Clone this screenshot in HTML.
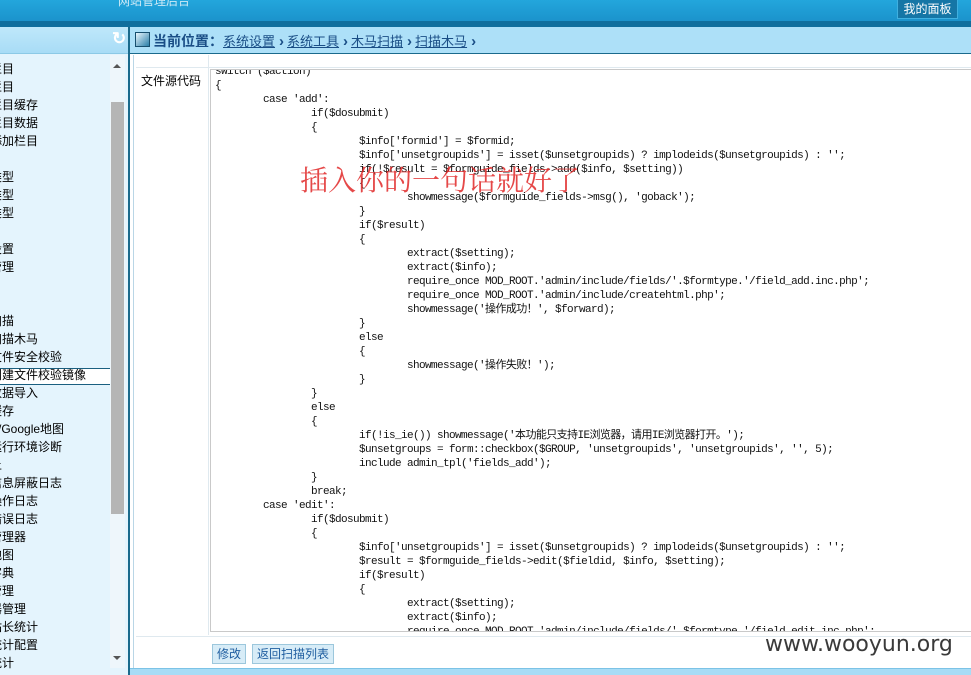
<!DOCTYPE html>
<html><head><meta charset="utf-8"><style>
*{margin:0;padding:0;box-sizing:border-box}
body{width:971px;height:675px;overflow:hidden;position:relative;background:#fff;font-family:"Liberation Sans","Noto Sans CJK SC",sans-serif;font-size:12px;color:#000}
.a{position:absolute}
#hdr{left:0;top:0;width:971px;height:21px;background:linear-gradient(#23a6dc,#1b93cc)}
#strip{left:0;top:21px;width:971px;height:6px;background:#0f6e9d}
#btn{left:897px;top:0;width:61px;height:19px;background:#1576a6;border:1px solid #3fb0e0;border-top:none;color:#fff;font-size:12px;text-align:center;line-height:18px}
#side{left:0;top:27px;width:128px;height:648px;background:#e4f4fd}
#sidehd{left:0;top:27px;width:128px;height:27px;background:linear-gradient(#bfe8fb,#a8dcf6);border-bottom:1px solid #8cc9e6}
#sb{left:110px;top:55px;width:15px;height:613px;background:#eef6fb}
#thumb{left:111px;top:102px;width:13px;height:412px;background:#b5b5b5}
#sideline{left:128px;top:27px;width:2px;height:648px;background:#1a6a8c}
.it{position:absolute;left:-10px;font-size:12px;line-height:18px;white-space:nowrap}
#sel{left:0;top:368px;width:110px;height:17px;background:#fff;border-top:1px solid #1a5f80;border-bottom:1px solid #1a5f80}
#crumb{left:130px;top:27px;width:841px;height:27px;background:#ade0f8;border-bottom:1px solid #1a6a8c}
#main{left:133px;top:55px;width:838px;height:613px;background:#fff;border-left:1px solid #b9d6e6}
#lbl{left:136px;top:55px;width:73px;height:580px;border-right:1px solid #dfe9ef}
#code{left:210px;top:69px;width:761px;height:563px;border:1px solid #c9c9c9;border-right:none;overflow:hidden;background:#fff}
pre{font-family:"Liberation Mono","Noto Sans CJK SC",monospace;font-size:11px;letter-spacing:-0.6px;line-height:14px;position:absolute;left:4px;top:-5px;color:#111}
#bot{left:130px;top:668px;width:841px;height:7px;background:#a8dcf6;border-top:1px solid #7cc3e6}
.b{position:absolute;top:644px;height:20px;border:1px solid #9cc7dc;background:#d7ecf7;color:#1f5ea0;font-size:12px;line-height:18px;padding:0 4px}
#crumb u{font-size:13px}
#crumb i{font-style:normal;font-weight:bold;font-size:15px;margin:0 3px 0 4px}
</style></head><body>
<div id="hdr" class="a"><span class="a" style="left:118px;top:-8px;color:#cde9f6;font-size:12px">网站管理后台</span></div>
<div id="strip" class="a"></div>
<div id="btn" class="a">我的面板</div>
<div id="side" class="a"></div>
<div id="sidehd" class="a"><span class="a" style="left:112px;top:2px;color:#fff;font-weight:bold;font-size:17px">↻</span></div>
<div id="sel" class="a"></div>
<div class="a" style="left:0;top:0">
<div class="it" style="top:60px">栏目</div>
<div class="it" style="top:78px">栏目</div>
<div class="it" style="top:96px">栏目缓存</div>
<div class="it" style="top:114px">栏目数据</div>
<div class="it" style="top:132px">添加栏目</div>
<div class="it" style="top:168px">类型</div>
<div class="it" style="top:186px">类型</div>
<div class="it" style="top:204px">类型</div>
<div class="it" style="top:240px">设置</div>
<div class="it" style="top:258px">管理</div>
<div class="it" style="top:312px">扫描</div>
<div class="it" style="top:330px">扫描木马</div>
<div class="it" style="top:348px">文件安全校验</div>
<div class="it" style="top:366px">创建文件校验镜像</div>
<div class="it" style="top:384px">数据导入</div>
<div class="it" style="top:402px">缓存</div>
<div class="it" style="top:420px;left:-2px">/Google地图</div>
<div class="it" style="top:438px">运行环境诊断</div>
<div class="it" style="top:456px">上</div>
<div class="it" style="top:474px">信息屏蔽日志</div>
<div class="it" style="top:492px">操作日志</div>
<div class="it" style="top:510px">错误日志</div>
<div class="it" style="top:528px">管理器</div>
<div class="it" style="top:546px">地图</div>
<div class="it" style="top:564px">字典</div>
<div class="it" style="top:582px">管理</div>
<div class="it" style="top:600px">器管理</div>
<div class="it" style="top:618px">站长统计</div>
<div class="it" style="top:636px">统计配置</div>
<div class="it" style="top:654px">统计</div>
</div>
<div id="sb" class="a"></div>
<div id="thumb" class="a"></div>
<div class="a" style="left:113px;top:64px;width:0;height:0;border-left:4px solid transparent;border-right:4px solid transparent;border-bottom:4px solid #555"></div>
<div class="a" style="left:113px;top:656px;width:0;height:0;border-left:4px solid transparent;border-right:4px solid transparent;border-top:4px solid #555"></div>
<div id="sideline" class="a"></div>
<div id="crumb" class="a">
<div class="a" style="left:5px;top:5px;width:15px;height:15px;border:1px solid #174f6e;background:linear-gradient(135deg,#e9f6fd,#2a7fa8)"></div>
<div class="a" style="left:23px;top:4px;font-size:14px;white-space:nowrap;color:#1a4e86"><b>当前位置：</b><u>系统设置</u><i>›</i><u>系统工具</u><i>›</i><u>木马扫描</u><i>›</i><u>扫描木马</u><i>›</i></div>
</div>
<div id="main" class="a"></div>
<div id="lbl" class="a"><div class="a" style="left:5px;top:17px;font-size:12px">文件源代码</div></div>
<div class="a" style="left:136px;top:67px;width:835px;height:1px;background:#dfe9ef"></div>
<div id="code" class="a"><pre>switch ($action)
{
        case 'add':
                if($dosubmit)
                {
                        $info['formid'] = $formid;
                        $info['unsetgroupids'] = isset($unsetgroupids) ? implodeids($unsetgroupids) : '';
                        if(!$result = $formguide_fields->add($info, $setting))
                        {
                                showmessage($formguide_fields->msg(), 'goback');
                        }
                        if($result)
                        {
                                extract($setting);
                                extract($info);
                                require_once MOD_ROOT.'admin/include/fields/'.$formtype.'/field_add.inc.php';
                                require_once MOD_ROOT.'admin/include/createhtml.php';
                                showmessage('操作成功！', $forward);
                        }
                        else
                        {
                                showmessage('操作失败！');
                        }
                }
                else
                {
                        if(!is_ie()) showmessage('本功能只支持IE浏览器，请用IE浏览器打开。');
                        $unsetgroups = form::checkbox($GROUP, 'unsetgroupids', 'unsetgroupids', '', 5);
                        include admin_tpl('fields_add');
                }
                break;
        case 'edit':
                if($dosubmit)
                {
                        $info['unsetgroupids'] = isset($unsetgroupids) ? implodeids($unsetgroupids) : '';
                        $result = $formguide_fields->edit($fieldid, $info, $setting);
                        if($result)
                        {
                                extract($setting);
                                extract($info);
                                require_once MOD_ROOT.'admin/include/fields/'.$formtype.'/field_edit.inc.php';
</pre></div>
<div class="a" style="left:300px;top:159px;font-size:28px;color:rgba(225,40,40,0.85);font-family:'Noto Serif CJK SC',serif;white-space:nowrap">插入你的一句话就好了</div>
<div class="a" style="left:136px;top:636px;width:835px;height:1px;background:#dfe9ef"></div>
<div class="b" style="left:212px">修改</div>
<div class="b" style="left:252px">返回扫描列表</div>
<div class="a" style="left:765px;top:632px;font-size:22px;color:#3a3a3a;font-family:'DejaVu Sans',sans-serif">www.wooyun.org</div>
<div id="bot" class="a"></div>
</body></html>
